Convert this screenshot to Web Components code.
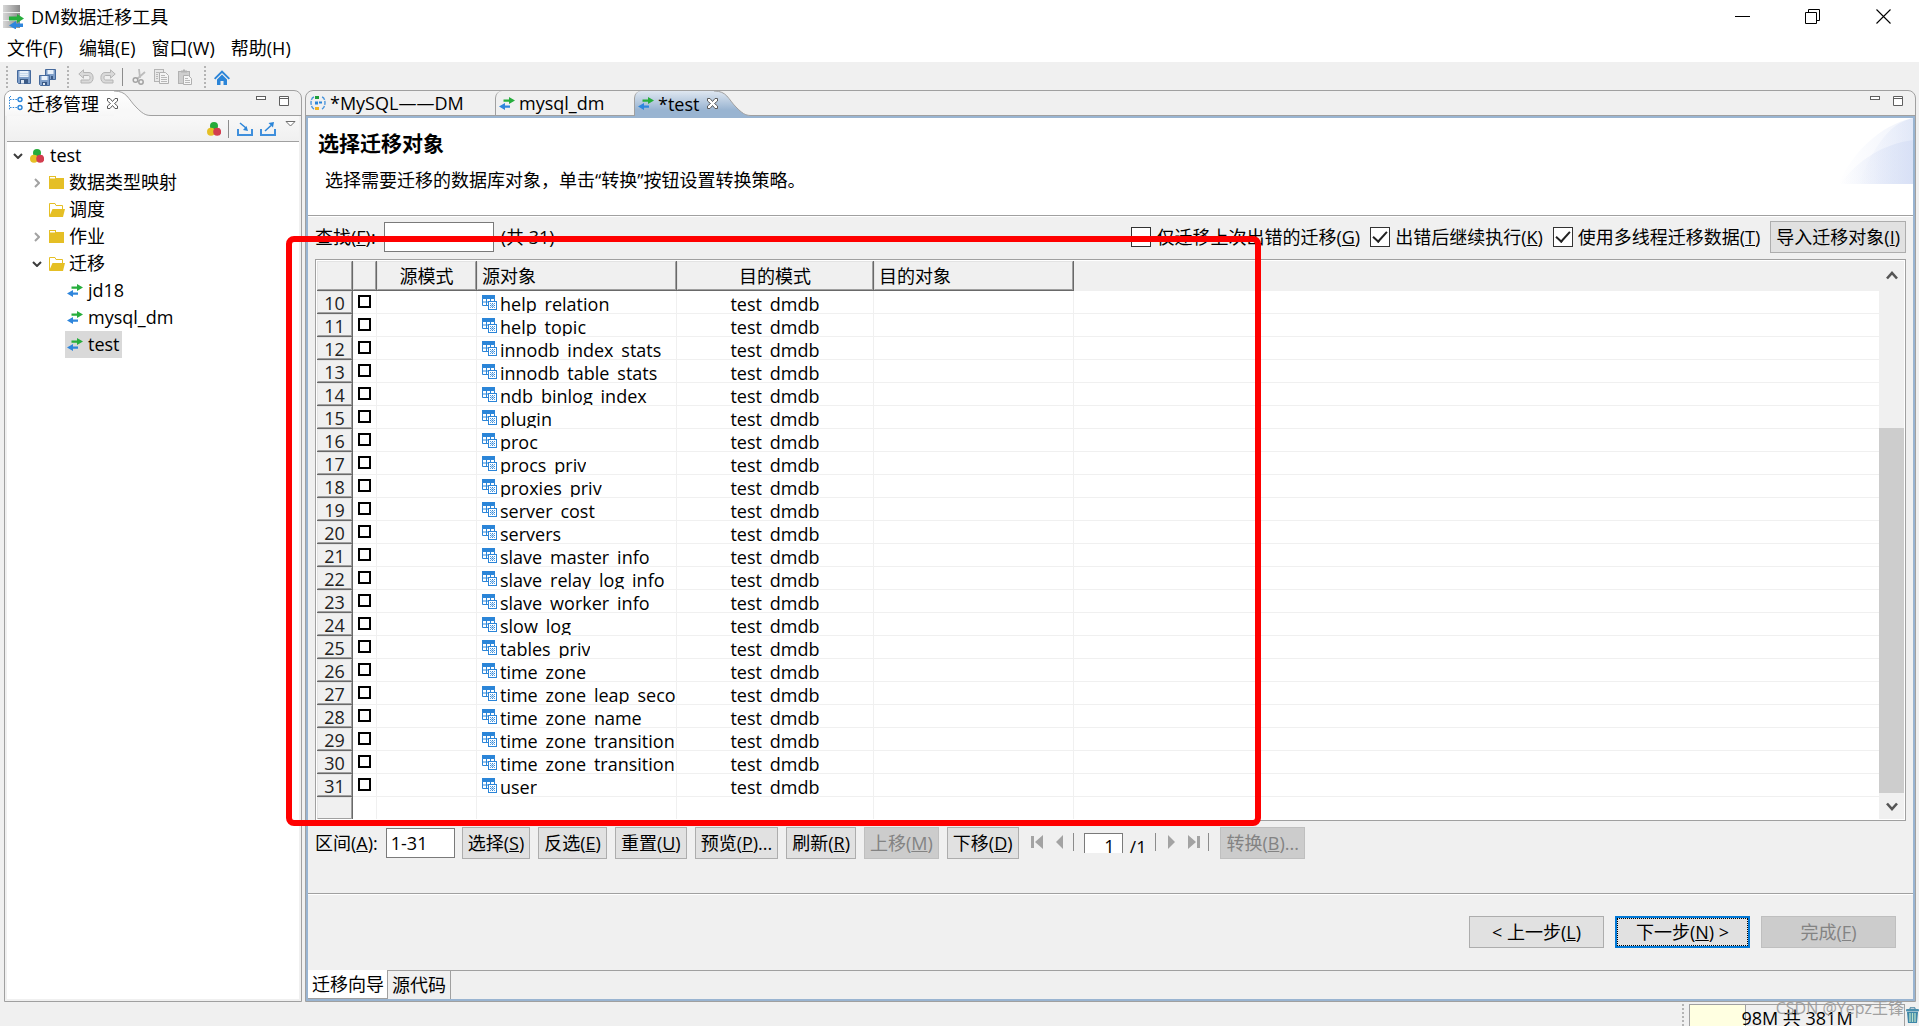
<!DOCTYPE html>
<html lang="zh-CN">
<head>
<meta charset="utf-8">
<title>DM数据迁移工具</title>
<style>
  html, body { margin: 0; height: 100%; }
  body {
    background: #f0f0f0; color: #000; overflow: hidden;
    font: 18px/24px "Open Sans", "Noto Sans CJK SC", sans-serif;
  }
</style>
</head>
<body>
<dm-app></dm-app>
<script>
const ICONS = {
  app: [22, 24, `<defs><linearGradient id="s"><stop offset="0" stop-color="#d8d8d8"/><stop offset="1" stop-color="#8a8a8a"/></linearGradient></defs><path d="M0 0h17v7H0zM0 8h17v7H0zM0 16h17v7H0z" fill="url(#s)"/><path d="M0 7.500h17M0 15.500h17" stroke="#efefef"/><path d="M6 11.500h8V9l7 4.500-7 4.500v-2.500H6z" fill="#27ae3d"/><path d="M20 18.500h-7V16l-7 4.500 7 4V22h7z" fill="#2f86dc"/>`],
  save: [16, 16, `<path d="M1.500 1.500h13v13h-12l-1-1z" fill="#7f9fc9" stroke="#45699c"/><rect x="3.500" y="2" width="9" height="6" fill="#e9f1fa"/><path d="M4 4.500h8M4 6.500h8" stroke="#b8cde4" stroke-width=".7"/><rect x="4" y="10" width="8" height="4.500" fill="#3b5a86"/><rect x="5" y="11" width="3" height="3.500" fill="#dfe8f3"/>`],
  saveall: [17, 17, `<path d="M6.500.5h10v10h-9l-1-1z" fill="#7f9fc9" stroke="#45699c"/><rect x="8.500" y="1" width="6" height="4" fill="#e9f1fa"/><path d="M.5 6.500h10v10h-9l-1-1z" fill="#7f9fc9" stroke="#45699c"/><rect x="2.500" y="7" width="6" height="4" fill="#e9f1fa"/><rect x="3" y="13" width="5" height="3" fill="#3b5a86"/><rect x="4" y="14" width="2" height="2" fill="#dfe8f3"/><rect x="12" y="7" width="2" height="3" fill="#3b5a86"/>`],
  undo: [16, 16, `<path d="M.8 5L5.500.8v2.700h5.500c5.500 0 5.500 10.500 0 10.500H3v-3h7.500c2 0 2-4.500 0-4.500h-5v2.700z" fill="#d9d9d9" stroke="#b4b4b4"/>`],
  redo: [16, 16, `<path d="M15.200 5L10.500.8v2.700H5c-5.500 0-5.500 10.500 0 10.500h8v-3H5.500c-2 0-2-4.500 0-4.500h5v2.700z" fill="#d9d9d9" stroke="#b4b4b4"/>`],
  cut: [14, 16, `<path d="M7 0l1 9M13 3L5 10" stroke="#bcbcbc" stroke-width="1.800"/><circle cx="3.500" cy="11" r="2.300" fill="none" stroke="#a3a3a3" stroke-width="1.500"/><circle cx="9" cy="13" r="2.200" fill="none" stroke="#a3a3a3" stroke-width="1.500"/>`],
  copy: [16, 16, `<rect x=".5" y=".5" width="9" height="12" fill="#e8e8e8" stroke="#b4b4b4"/><path d="M5.500 3.500h6l3 3v8h-9z" fill="#f4f4f4" stroke="#b0b0b0"/><path d="M7 6.500h4M7 8.500h6M7 10.500h6M7 12.500h6M2 3.500h3M2 5.500h2M2 7.500h2M2 9.500h2" stroke="#b8b8b8"/>`],
  paste: [15, 16, `<rect x=".5" y="2.500" width="11" height="12" fill="#cfcfcf" stroke="#b2b2b2"/><path d="M3 3.500V1.500h2V.5h2v1h2v2z" fill="#b4b4b4"/><path d="M5.500 6.500h5l3 3v6h-8z" fill="#f6f6f6" stroke="#b0b0b0"/><path d="M7 9.500h3M7 11.500h5M7 13.500h5" stroke="#b8b8b8"/>`],
  home: [16, 15, `<path d="M0 8.300L8 .3l8 8-1.300 1.200L8 3 1.300 9.500z" fill="#2b85d8"/><path d="M3 9.500l5-5 5 5V15h-3.500v-4h-3v4H3z" fill="#2b85d8"/>`],
  nav: [14, 15, `<path d="M1 .5h1M1 3.500h9M1 11.500h9M.5 1v13" stroke="#2b85d8" stroke-dasharray="1.500 1.200" fill="none"/><circle cx="11" cy="3.500" r="2" fill="#fff" stroke="#2b85d8" stroke-width="1.400"/><circle cx="11" cy="11.500" r="2" fill="#fff" stroke="#2b85d8" stroke-width="1.400"/>`],
  close: [11, 11, `<path d="M.5.5H3l2.500 3L8 .5h2.500V3l-3 2.500 3 2.500v2.500H8l-2.500-3-2.500 3H.5V8l3-2.500L.5 3z" fill="#fff" stroke="#5a5a5a"/>`],
  balls: [14, 14, `<circle cx="7" cy="4" r="4" fill="#25ab3a"/><circle cx="4" cy="9.800" r="4" fill="#e5bf25"/><circle cx="10.200" cy="9.800" r="4" fill="#d33d4e"/>`],
  imp: [16, 14, `<path d="M1 7v6h14V7" fill="none" stroke="#3f8fdc" stroke-width="2"/><path d="M3 1l6 5" stroke="#2b85d8" stroke-width="1.500"/><path d="M11 9L6 8l3.500-4z" fill="#2b85d8"/>`],
  exp: [16, 14, `<path d="M1 7v6h14V7" fill="none" stroke="#3f8fdc" stroke-width="2"/><path d="M5 9l6-5.500" stroke="#2b85d8" stroke-width="1.500"/><path d="M14 0l-1 5.500L8.500 1z" fill="#2b85d8"/>`],
  menu: [11, 6, `<path d="M1 .5h9L5.500 5z" fill="#fff" stroke="#6e6e6e"/>`],
  min: [10, 4, `<rect x=".5" y=".5" width="9" height="3" fill="#fff" stroke="#5f5f5f"/>`],
  max: [10, 10, `<path d="M.5.5h9v9h-9zM.5 2.500h9" fill="#fff" stroke="#5f5f5f"/>`],
  open: [10, 6, `<path d="M1 1l4 4 4-4" fill="none" stroke="#3c3c3c" stroke-width="2"/>`],
  shut: [6, 10, `<path d="M1 1l4 4-4 4" fill="none" stroke="#a2a2a2" stroke-width="2"/>`],
  folder: [15, 13, `<path d="M0 0h7v2h8v11H0z" fill="#e5bf25"/><path d="M1 1h5v1.500H1z" fill="#fff"/>`],
  folderopen: [16, 14, `<path d="M.5 13V.5H6l1 2h6.500V6" fill="#fff" stroke="#e5bf25"/><path d="M3.500 6H16l-2 8H0z" fill="#e5bf25"/>`],
  swap: [16, 13, `<path d="M4.500 2.500h5.500V0l6 3.500-6 3.500V4.800H4.500z" fill="#27ae3d"/><path d="M11 8.500H6V6L0 9.500 6 13v-2.300h5z" fill="#2f86dc"/>`],
  conv: [16, 14, `<path d="M4 1C0 2 0 11 4 13M12 1c4 1 4 10 0 12" fill="none" stroke="#4b96dc" stroke-width="1.400" stroke-dasharray="4 1"/><rect x="5" y="0" width="4" height="3" fill="#1e9e3a"/><rect x="5" y="5.500" width="3" height="3" fill="#2b85d8"/><rect x="9" y="5.500" width="3" height="2" fill="#2b85d8"/><rect x="5" y="11" width="4" height="3" fill="#f0b323"/>`],
  table: [15, 15, `<path d="M0 0h13v4H0z" fill="#2b85d8"/><path d="M.5 3.500h12v7H.5zM.5 7h12M4.500 4v7M8.500 4v3" fill="#fff" stroke="#2b85d8"/><rect x="6.500" y="6.500" width="8" height="8" fill="#fff" stroke="#2b85d8"/><path d="M8 8l5 5M13 8l-5 5M8 10.500h5M10.500 8v5" stroke="#2b85d8" stroke-dasharray="1.200 .8"/>`],
  first: [12, 14, `<path d="M0 1h3v12H0zM12 0v14L4 7z" fill="#a3a3a3"/>`],
  prev: [7, 14, `<path d="M7 0v14L0 7z" fill="#a3a3a3"/>`],
  next: [7, 14, `<path d="M0 0v14l7-7z" fill="#a3a3a3"/>`],
  last: [12, 14, `<path d="M9 1h3v12H9zM0 0v14l8-7z" fill="#a3a3a3"/>`],
  up: [12, 9, `<path d="M1 7.500l5-5.500 5 5.500" fill="none" stroke="#555" stroke-width="2.600"/>`],
  down: [12, 9, `<path d="M1 1.500L6 7l5-5.500" fill="none" stroke="#555" stroke-width="2.600"/>`],
  wmin: [15, 15, `<path d="M0 7.500h15" stroke="#000"/>`],
  wmax: [15, 15, `<path d="M.5 3.500h11v11H.5zM3.500 3.500v-3h11v11h-3" fill="none" stroke="#000"/>`],
  wclose: [15, 15, `<path d="M.5.5l14 14M14.500.5l-14 14" stroke="#000" stroke-width="1.100"/>`],
  trash: [13, 16, `<path d="M4 2V.8h5V2" fill="none" stroke="#3b7a99"/><rect x="0" y="2" width="13" height="2.500" rx="1" fill="#4a8fae"/><path d="M1 5h11l-1 11H2z" fill="#3d86a8"/><path d="M4 6v9M6.500 6v9M9 6v9" stroke="#b9e0c9" stroke-width="1.300"/>`],
};

function define(name, css, html, setup) {
  const tpl = document.createElement('template');
  tpl.innerHTML = `<style>:host{display:block;box-sizing:border-box}*{box-sizing:border-box}button,input{font:inherit;color:inherit;margin:0}
  .plain{border:0;padding:0;background:none;display:flex;align-items:center;justify-content:center}${css}</style>${html}`;
  customElements.define(name, class extends HTMLElement {
    connectedCallback() {
      if (this.shadowRoot) return;
      const root = this.attachShadow({ mode: 'open' });
      root.append(tpl.content.cloneNode(true));
      if (setup) setup(root, this);
    }
  });
}

define('dm-icon', `:host{display:block;flex:none}svg{display:block}`, ``, (root, host) => {
  const [w, h, body] = ICONS[host.getAttribute('name')];
  root.innerHTML += `<svg width="${w}" height="${h}" viewBox="0 0 ${w} ${h}" aria-hidden="true">${body}</svg>`;
});

/* Push button with the classic raised grey face */
define('dm-button', `
  :host{display:block;flex:none}
  button{display:block;width:100%;height:32px;padding:0 5px;border:1px solid #adadad;background:#e1e1e1;line-height:30px;white-space:nowrap}
  button:disabled{background:#ccc;border-color:#bfbfbf;color:#838383}
  :host([wide]){width:135px}
  :host([default]) button{border:2px solid #0078d7;outline:1px dotted #000;outline-offset:-3px;line-height:28px}
`, `<button type="button"><slot></slot></button>`, (root, host) => {
  root.querySelector('button').disabled = host.hasAttribute('disabled');
});

define('dm-check', `
  label{display:flex;align-items:center;gap:5px;white-space:nowrap}
  input{appearance:none;width:20px;height:20px;border:1px solid #333;background:#fff;display:grid;place-items:center}
  input:checked::before{content:"";width:6px;height:12px;margin-top:-4px;border:solid #222;border-width:0 2px 2px 0;rotate:42deg}
`, `<label><input type="checkbox"><span><slot></slot></span></label>`, (root, host) => {
  root.querySelector('input').checked = host.hasAttribute('checked');
});

define('dm-titlebar', `
  :host{display:flex;align-items:center;height:34px;padding:0 16px 0 3px;background:#fff}
  .name{flex:1;margin-left:6px}
  .win{display:flex;margin-top:-2px}
  .win button{width:70px;height:30px}
  .win button:last-child{width:40px;margin-left:16px}
`, `<dm-icon name="app"></dm-icon><span class="name">DM数据迁移工具</span>
<div class="win"><button class="plain" aria-label="最小化"><dm-icon name="wmin"></dm-icon></button><button class="plain" aria-label="还原"><dm-icon name="wmax"></dm-icon></button><button class="plain" aria-label="关闭"><dm-icon name="wclose"></dm-icon></button></div>`);

define('dm-menubar', `
  :host{display:flex;gap:16px;align-items:center;height:28px;padding:0 7px;background:#fff}
  button{white-space:nowrap}
`, `<button class="plain">文件(F)</button><button class="plain">编辑(E)</button><button class="plain">窗口(W)</button><button class="plain">帮助(H)</button>`);

define('dm-toolbar', `
  :host{display:flex;align-items:center;height:28px;padding:2px 6px 0}
  .grip{width:2px;height:22px;background:repeating-linear-gradient(#b4b4b4 0 2px,transparent 2px 4px)}
  .sep{width:1px;height:18px;background:#8c8c8c}
  .set{display:flex;align-items:center;gap:7px;padding:0 11px 0 8px}
  .edit{gap:6px;padding:0 6px 0 9px}
  .clip{gap:8px;padding:0 11px 0 9px}
`, `<span class="grip"></span>
<div class="set"><button class="plain" aria-label="保存"><dm-icon name="save"></dm-icon></button><button class="plain" aria-label="全部保存"><dm-icon name="saveall"></dm-icon></button></div>
<span class="grip"></span>
<div class="set edit"><button class="plain" aria-label="撤销"><dm-icon name="undo"></dm-icon></button><button class="plain" aria-label="重做"><dm-icon name="redo"></dm-icon></button></div>
<span class="sep"></span>
<div class="set clip"><button class="plain" aria-label="剪切"><dm-icon name="cut"></dm-icon></button><button class="plain" aria-label="复制"><dm-icon name="copy"></dm-icon></button><button class="plain" aria-label="粘贴"><dm-icon name="paste"></dm-icon></button></div>
<span class="grip"></span>
<div class="set"><button class="plain" aria-label="主页"><dm-icon name="home"></dm-icon></button></div>`);

/* One tab of a workbench part; the selected one ends in a curved shoulder */
define('dm-tab', `
  :host{display:flex;flex:none;height:25px}
  .body{flex:1;display:flex;align-items:center;gap:4px;padding:0 0 0 4px;border-bottom:1px solid #a0a0a0;white-space:nowrap}
  :host([split]) .body{border-left:1px solid #a0a0a0;border-top-left-radius:7px;padding-left:3px}
  .text{line-height:24px;flex:1}
  .shoulder,.x{display:none}
  :host([selected]) .body{border-bottom:0;background:var(--tab-fill)}
  :host([selected]) .shoulder{display:block;margin-left:-4px}
  :host([selected]) .x{display:flex;margin-left:4px;position:relative;z-index:1}
  .stop1{stop-color:var(--tab-top)} .stop2{stop-color:var(--tab-bottom)}
`, `<div class="body" role="tab"><slot name="icon"></slot><span class="text"><slot></slot></span><button class="plain x" aria-label="关闭"><dm-icon name="close"></dm-icon></button></div>
<svg class="shoulder" width="37" height="25" viewBox="0 0 37 25"><defs><linearGradient id="g" x1="0" y1="0" x2="0" y2="1"><stop class="stop1" offset="0"/><stop class="stop2" offset=".75"/></linearGradient></defs><path d="M0 0C13 0 14 8 22 16 28 22 31 24.500 37 24.500V25H0z" fill="url(#g)"/><path d="M0 0C13 0 14 8 22 16 28 22 31 24.500 37 24.500" fill="none" stroke="#a0a0a0"/></svg>`);

/* Framed workbench part: tab strip on top, content below */
define('dm-part', `
  :host{display:flex;flex-direction:column;min-width:0;min-height:0;border:1px solid #a0a0a0;border-radius:8px 8px 0 0;
    --tab-fill:linear-gradient(#fff,#fff 50%,#f6f6f6);--tab-top:#fff;--tab-bottom:#f8f8f8}
  :host([active]){--tab-fill:linear-gradient(#dfe7f1,#99b4d1 75%);--tab-top:#dfe7f1;--tab-bottom:#99b4d1}
  .strip{display:flex;height:25px;flex:none;overflow:hidden;border-radius:7px 7px 0 0}
  .rest{flex:1;display:flex;justify-content:flex-end;align-items:flex-start;gap:13px;padding:5px 12px 0 0;border-bottom:1px solid #a0a0a0}
  .content{flex:1;min-height:0;display:flex;flex-direction:column;padding:0 2px 2px}
  :host([active]) .content{border:2px solid #99b4d1;padding:0}
`, `<div class="strip"><slot name="tab"></slot><div class="rest"><button class="plain" aria-label="最小化"><dm-icon name="min"></dm-icon></button><button class="plain" aria-label="最大化"><dm-icon name="max"></dm-icon></button></div></div><div class="content"><slot></slot></div>`);

define('dm-tree', `
  :host{display:flex;flex-direction:column;flex:1;min-height:0}
  .tools{display:flex;align-items:center;justify-content:flex-end;gap:7px;height:26px;padding:1px 3px 0 0;border-bottom:1px solid #a0a0a0;background:linear-gradient(#f8f8f8,#f0f0f0)}
  .sep{width:1px;height:18px;background:#8c8c8c;margin-right:1px}
  .drop{margin:-10px 0 0 2px}
  ul{list-style:none;margin:0;padding:0;flex:1;background:#fff}
  li{display:flex;align-items:center;height:27px}
  .arrow{width:21px;display:flex;justify-content:center;flex:none}
  .item{display:flex;align-items:center;height:27px;padding:0 2px 2px}
  .pic{width:20px;flex:none;margin-top:2px}
  .l1{padding-left:19px}.l2{padding-left:37px}
  .l2 .pic{width:21px}
  .sel{background:#d9d9d9}
`, `<div class="tools"><button class="plain" aria-label="新建"><dm-icon name="balls"></dm-icon></button><span class="sep"></span><button class="plain" aria-label="导入"><dm-icon name="imp"></dm-icon></button><button class="plain" aria-label="导出"><dm-icon name="exp"></dm-icon></button><button class="plain drop" aria-label="菜单"><dm-icon name="menu"></dm-icon></button></div><ul role="tree"></ul>`,
(root) => {
  const nodes = [[0,'open','balls','test'],[1,'shut','folder','数据类型映射'],[1,'','folderopen','调度'],[1,'shut','folder','作业'],[1,'open','folderopen','迁移'],[2,'','swap','jd18'],[2,'','swap','mysql_dm'],[2,'','swap','test',true]];
  root.querySelector('ul').innerHTML = nodes.map(([l, a, i, t, s]) =>
    `<li role="treeitem" class="l${l}"><span class="arrow">${a ? `<dm-icon name="${a}"></dm-icon>` : ''}</span><span class="item${s ? ' sel' : ''}"><span class="pic"><dm-icon name="${i}"></dm-icon></span>${t}</span></li>`).join('');
});

define('dm-grid', `
  :host{display:flex;min-height:0;border:1px solid #a0a0a0;padding:1px;background:#fff}
  .view{flex:1;min-width:0;overflow:hidden}
  table{width:100%;border-collapse:separate;border-spacing:0;table-layout:fixed}
  th,td{padding:0;font-weight:400;overflow:hidden;white-space:nowrap;text-align:left}
  thead th{height:30px;background:#f0f0f0}
  thead th.h{border-right:1px solid #696969;border-bottom:1px solid #696969}
  thead .f{height:29px;line-height:28px;border:1px solid;border-color:#e3e3e3 #a0a0a0 #a0a0a0 #e3e3e3}
  thead .l .f{padding-left:4px}
  .c .f,.c .t{text-align:center}
  td{height:23px;border-right:1px solid #f0f0f0;border-bottom:1px solid #f0f0f0}
  td:last-child{border-right:0}
  tbody th{height:23px;border-right:1px solid #696969;border-bottom:1px solid #696969;background:#f0f0f0;color:#222}
  tbody th div{height:22px;line-height:22px;text-align:center;border:1px solid;border-color:#e3e3e3 #a0a0a0 #a0a0a0 #e3e3e3}
  .t{height:22px;line-height:26px;overflow:hidden}
  .obj{display:flex;gap:3px;padding:4px 0 0 5px;height:22px;overflow:hidden}
  .obj .t{height:18px;line-height:18px}
  input{appearance:none;display:block;width:13px;height:13px;margin:-1px 0 0 5px;border:2px solid #000;background:#fff}
  .bar{width:25px;flex:none;background:#f0f0f0;display:flex;flex-direction:column}
  .bar button{height:28px;flex:none}
  .bar button:last-child{height:26px}
  .track{flex:1;display:flex;flex-direction:column}
  .track::before{content:"";flex:139}
  .track::after{content:"";flex:364;background:#cdcdcd}
`, `<div class="view"><table><colgroup><col style="width:36px"><col style="width:24px"><col style="width:100px"><col style="width:200px"><col style="width:197px"><col style="width:200px"><col></colgroup>
<thead><tr><th class="h"><div class="f"></div></th><th class="h"><div class="f"></div></th><th class="h c"><div class="f">源模式</div></th><th class="h l"><div class="f">源对象</div></th><th class="h c"><div class="f">目的模式</div></th><th class="h l"><div class="f">目的对象</div></th><th></th></tr></thead><tbody></tbody></table></div>
<div class="bar"><button class="plain" aria-label="向上滚动"><dm-icon name="up"></dm-icon></button><div class="track"></div><button class="plain" aria-label="向下滚动"><dm-icon name="down"></dm-icon></button></div>`,
(root) => {
  const names = ['help_relation','help_topic','innodb_index_stats','innodb_table_stats','ndb_binlog_index','plugin','proc','procs_priv','proxies_priv','server_cost','servers','slave_master_info','slave_relay_log_info','slave_worker_info','slow_log','tables_priv','time_zone','time_zone_leap_second','time_zone_name','time_zone_transition','time_zone_transition_type','user'];
  root.querySelector('tbody').innerHTML = names.map((n, i) =>
    `<tr><th scope="row"><div>${i + 10}</div></th><td><input type="checkbox" aria-label="${n}"></td><td></td><td><div class="obj"><dm-icon name="table"></dm-icon><div class="t">${n}</div></div></td><td class="c"><div class="t">test_dmdb</div></td><td></td><td></td></tr>`).join('')
    + '<tr><th><div></div></th><td></td><td></td><td></td><td></td><td></td><td></td></tr>';
});

define('dm-pager', `
  :host{display:flex;align-items:flex-start;height:20px;overflow:hidden}
  button{height:18px}
  .sep{width:1px;height:18px;background:#8c8c8c}
  input{width:39px;height:26px;border:1px solid #7a7a7a;background:#fff;text-align:right;padding:0 7px 0 0;line-height:24px;margin-left:10px}
  .of{line-height:28px;padding:0 9px 0 7px}
  .g{display:flex;gap:13px;padding:0 10px 0 12px}
  .g:last-of-type{padding-right:8px}
`, `<div class="g"><button class="plain" aria-label="首页"><dm-icon name="first"></dm-icon></button><button class="plain" aria-label="上一页"><dm-icon name="prev"></dm-icon></button></div><span class="sep"></span>
<input value="1" aria-label="页码">
<span class="of">/1</span><span class="sep"></span>
<div class="g"><button class="plain" aria-label="下一页"><dm-icon name="next"></dm-icon></button><button class="plain" aria-label="末页"><dm-icon name="last"></dm-icon></button></div><span class="sep"></span>`);

define('dm-wizard', `
  :host{display:flex;flex-direction:column;flex:1;min-height:0}
  header{display:flex;height:98px;flex:none;background:#fff;border-bottom:1px solid #a0a0a0}
  header div{flex:1;padding:12px 0 0 10px}
  h1{font-size:21px;line-height:26px;font-weight:700;margin:0}
  p{margin:12px 0 0 7px}
  main{flex:1;min-height:0;display:flex;flex-direction:column;gap:6px;padding:4px 7px 34px;border-top:1px solid #fff}
  dm-grid{flex:1}
  .row{display:flex;align-items:center;height:32px;flex:none;white-space:nowrap}
  .row input{height:30px;border:1px solid #7a7a7a;background:#fff;padding:0 4px;margin-left:8px}
  #find{width:110px;margin-right:7px}
  #range{width:69px;margin-right:7px}
  .right{flex:1;display:flex;align-items:center;justify-content:flex-end;gap:10px}
  .btns{display:flex;align-items:center;gap:8px}
  .conv{margin-left:11px}
  footer{display:flex;justify-content:flex-end;gap:11px;flex:none;padding:22px 17px;border-top:1px solid #a0a0a0;box-shadow:inset 0 1px #fff}
  nav{display:flex;flex:none;height:29px;border-top:1px solid #a0a0a0}
  nav button{border:0;border-right:1px solid #a0a0a0;background:none;padding:0 4px;line-height:28px;height:28px}
  nav .on{background:#fff;border-bottom:1px solid #a0a0a0;margin-top:-1px;height:29px;padding:0 3px 0 4px}
`, `<header><div><h1>选择迁移对象</h1><p>选择需要迁移的数据库对象，单击“转换”按钮设置转换策略。</p></div>
<svg width="75" height="66" viewBox="0 0 75 66" aria-hidden="true"><defs><linearGradient id="a"><stop offset="0" stop-color="#dde4f7" stop-opacity="0"/><stop offset="1" stop-color="#d5def5"/></linearGradient></defs><path d="M0 66C15 35 40 8 75 0v66z" fill="url(#a)" opacity=".4"/><path d="M32 40C45 18 55 5 75 0v66H20z" fill="url(#a)" opacity=".5"/><path d="M2 66C20 42 45 26 75 22v44z" fill="url(#a)" opacity=".75"/></svg></header>
<main>
<div class="row"><label for="find">查找(<u>F</u>):</label><input id="find"><span>(共 31)</span>
<div class="right"><dm-check>仅迁移上次出错的迁移(<u>G</u>)</dm-check><dm-check checked>出错后继续执行(<u>K</u>)</dm-check><dm-check checked>使用多线程迁移数据(<u>T</u>)</dm-check><dm-button>导入迁移对象(<u>I</u>)</dm-button></div></div>
<dm-grid></dm-grid>
<div class="row"><label for="range">区间(<u>A</u>):</label><input id="range" value="1-31">
<div class="btns"><dm-button>选择(<u>S</u>)</dm-button><dm-button>反选(<u>E</u>)</dm-button><dm-button>重置(<u>U</u>)</dm-button><dm-button>预览(<u>P</u>)...</dm-button><dm-button>刷新(<u>R</u>)</dm-button><dm-button disabled>上移(<u>M</u>)</dm-button><dm-button>下移(<u>D</u>)</dm-button></div>
<dm-pager></dm-pager><dm-button class="conv" disabled>转换(<u>B</u>)...</dm-button></div>
</main>
<footer><dm-button wide>&lt; 上一步(<u>L</u>)</dm-button><dm-button wide default>下一步(<u>N</u>) &gt;</dm-button><dm-button wide disabled>完成(<u>F</u>)</dm-button></footer>
<nav><button class="on">迁移向导</button><button>源代码</button></nav>`);

define('dm-statusbar', `
  :host{display:flex;justify-content:flex-end;height:24px;padding-top:2px;overflow:hidden;position:relative}
  .grip{width:2px;margin-right:5px;background:repeating-linear-gradient(#b4b4b4 0 2px,transparent 2px 4px)}
  .heap{width:216px;height:26px;border:1px solid #a0a0a0;background:linear-gradient(90deg,#ffffe1 55px,#a0a0a0 55px 56px,#f0f0f0 56px);text-align:center;line-height:26px}
  .gc{width:14px}
  .mark{position:absolute;right:15px;top:-6px;color:#999;font-size:16px;opacity:.9}
`, `<span class="grip"></span><div class="heap">98M 共 381M</div><button class="plain gc" aria-label="垃圾回收"><dm-icon name="trash"></dm-icon></button><span class="mark">CSDN @Yepz王锋</span>`);

define('dm-app', `
  :host{display:flex;flex-direction:column;height:100vh}
  .work{flex:1;min-height:0;display:flex;gap:3px;padding:0 3px 0 4px;position:relative}
  .side{width:298px;flex:none}
  .edit{flex:1}
  .t1{width:189px}.t2{width:139px}
  .note{position:absolute;left:286px;top:146px;width:975px;height:590px;border:6px solid #f00;border-radius:8px;pointer-events:none}
  dm-statusbar{z-index:1;overflow:visible}
`, `<dm-titlebar></dm-titlebar><dm-menubar></dm-menubar><dm-toolbar></dm-toolbar>
<div class="work">
<dm-part class="side"><dm-tab slot="tab" selected><dm-icon slot="icon" name="nav"></dm-icon>迁移管理</dm-tab><dm-tree></dm-tree></dm-part>
<dm-part class="edit" active>
<dm-tab slot="tab" class="t1"><dm-icon slot="icon" name="conv"></dm-icon>*MySQL——DM</dm-tab>
<dm-tab slot="tab" class="t2" split><dm-icon slot="icon" name="swap"></dm-icon>mysql_dm</dm-tab>
<dm-tab slot="tab" selected split><dm-icon slot="icon" name="swap"></dm-icon>*test</dm-tab>
<dm-wizard></dm-wizard></dm-part>
<div class="note"></div>
</div>
<dm-statusbar></dm-statusbar>`);
</script>
</body>
</html>
